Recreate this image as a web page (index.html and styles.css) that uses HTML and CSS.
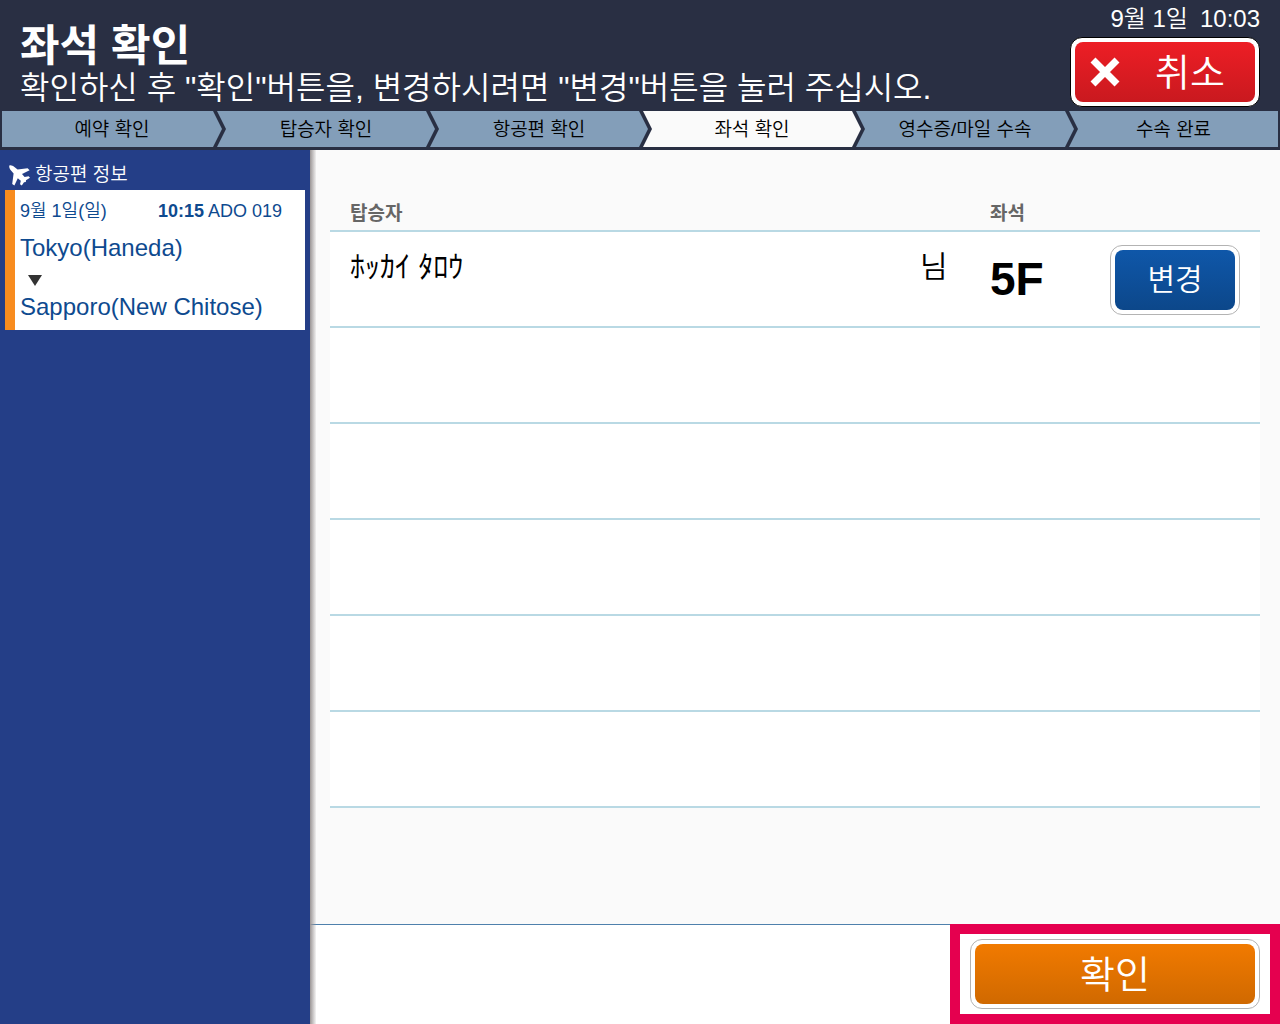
FILE: index.html
```html
<!DOCTYPE html>
<html lang="ko">
  <head>
    <meta charset="UTF-8" />
    <meta name="viewport" content="width=device-width" />
    <title>좌석 확인</title>
    <link rel="stylesheet" href="styles.css">
  </head>
  <body>
    <header class="header">
      <div class="header-top">
        <div class="header-title">
          <h1>좌석 확인</h1>
          <p>확인하신 후 "확인"버튼을, 변경하시려면 "변경"버튼을 눌러 주십시오.</p>
        </div>
        <div class="header-side">
          <div class="clock"><span>9월 1일</span><span>10:03</span></div>
          <button type="button" class="btn btn-cancel">
            <span class="btn-face">
              <svg class="icon-cross" viewBox="0 0 30 30" aria-hidden="true">
                <path d="M3 3L27 27M27 3L3 27" stroke="#fff" stroke-width="7" />
              </svg>
              <span class="btn-text">취소</span>
            </span>
          </button>
        </div>
      </div>
      <ol class="steps">
        <li>예약 확인</li>
        <li>탑승자 확인</li>
        <li>항공편 확인</li>
        <li class="current">좌석 확인</li>
        <li>영수증/마일 수속</li>
        <li>수속 완료</li>
      </ol>
    </header>

    <div class="content">
      <aside class="sidebar">
        <h2>
          <svg class="icon-plane" viewBox="0 0 21 21" aria-hidden="true">
            <path d="M0.4 0.4C2 -0.1 4 0.8 5.4 2L8.6 4.6L18.6 3.2L20.6 5.2L13 9L15.6 12L19.6 11.2L21 12.8L17 15.2L16.8 17L15 17.2L12.8 20.6L11 19.2L11.8 15.8L8.8 13.2L5.4 20.4L3.2 19L4.6 8.6L1.8 5.2C0.8 3.8 -0.2 2 0.4 0.4Z" fill="#fff" />
          </svg>
          항공편 정보
        </h2>
        <div class="flight">
          <div class="flight-info">
            <span>9월 1일(일)</span>
            <span class="flight-no"><b>10:15</b><span>ADO 019</span></span>
          </div>
          <p class="city">Tokyo(Haneda)</p>
          <div class="flight-arrow"></div>
          <p class="city">Sapporo(New Chitose)</p>
        </div>
      </aside>

      <main class="main">
        <div class="seats">
          <table>
            <thead>
              <tr>
                <th>탑승자</th>
                <th class="col-suffix"></th>
                <th class="col-seat">좌석</th>
                <th class="col-change"></th>
              </tr>
            </thead>
            <tbody>
              <tr>
                <td class="name">ﾎｯｶｲ ﾀﾛｳ</td>
                <td class="suffix">님</td>
                <td class="seat">5F</td>
                <td class="change">
                  <button type="button" class="btn btn-change">
                    <span class="btn-face">변경</span>
                  </button>
                </td>
              </tr>
              <tr><td colspan="4"></td></tr>
              <tr><td colspan="4"></td></tr>
              <tr><td colspan="4"></td></tr>
              <tr><td colspan="4"></td></tr>
              <tr><td colspan="4"></td></tr>
            </tbody>
          </table>
        </div>
        <footer class="footer">
          <div class="highlight">
            <button type="button" class="btn btn-confirm">
              <span class="btn-face">확인</span>
            </button>
          </div>
        </footer>
      </main>
    </div>
  </body>
</html>
```
FILE: styles.css
```css
* {
  box-sizing: border-box;
}

body {
  display: flex;
  flex-direction: column;
  min-height: 100vh;
  margin: 0;
  font-family: "Liberation Sans", "Noto Sans CJK KR", sans-serif;
  font-weight: 350;
  background-color: #fafafa;
  color: #000;
}

h1,
h2,
p {
  margin: 0;
}

b {
  font-weight: bold;
}

/* header */
.header {
  padding: 0 2px 3px;
  background-color: #292f43;
  color: #fff;
}

.header-top {
  display: flex;
  justify-content: space-between;
  height: 111px;
  padding: 0 18px;
}

.header-title {
  padding-top: 22px;
}

.header-title h1 {
  font-size: 43px;
  line-height: 48px;
}

.header-title p {
  font-size: 32px;
  line-height: 36px;
}

.header-side {
  display: flex;
  flex-direction: column;
  align-items: flex-end;
}

.clock {
  display: flex;
  gap: 12px;
  padding-top: 1px;
  font-size: 24px;
  line-height: 36px;
}

/* buttons */
.btn {
  padding: 4px;
  border: 1px solid #b3b3b3;
  border-radius: 12px;
  background-color: #fff;
  color: #fff;
  font-family: inherit;
  font-weight: inherit;
  cursor: pointer;
}

.btn-face {
  display: flex;
  align-items: center;
  justify-content: center;
  height: 60px;
  padding-bottom: 6px;
  border-radius: 8px;
}

.btn-cancel {
  width: 190px;
  border-color: #000;
  font-size: 38px;
}

.btn-cancel .btn-face {
  padding: 0 30px 0 15px;
  background: linear-gradient(#ed1e25, #c9191f);
}

.btn-text {
  flex: 1;
  padding-bottom: 6px;
  text-align: right;
}

.btn-change {
  width: 130px;
  font-size: 30px;
}

.btn-change .btn-face {
  background: linear-gradient(#0f57a9, #0c478a);
}

.btn-confirm {
  width: 290px;
  font-size: 38px;
}

.btn-confirm .btn-face {
  background: linear-gradient(#f17a00, #d06900);
}

.icon-cross {
  width: 30px;
  height: 30px;
}

/* progress steps */
.steps {
  display: flex;
  margin: 0;
  padding: 0;
  list-style: none;
}

.steps li {
  flex: 218 1 0;
  height: 36px;
  margin-left: -5px;
  background-color: #839eb9;
  color: #000;
  font-size: 19px;
  line-height: 38px;
  text-align: center;
  white-space: nowrap;
  clip-path: polygon(0 0, calc(100% - 9px) 0, 100% 50%, calc(100% - 9px) 100%, 0 100%, 9px 50%);
}

.steps li:first-child {
  flex-grow: 220;
  margin-left: 0;
  clip-path: polygon(0 0, calc(100% - 9px) 0, 100% 50%, calc(100% - 9px) 100%, 0 100%);
}

.steps li:last-child {
  flex-grow: 209;
  clip-path: polygon(0 0, 100% 0, 100% 100%, 0 100%, 9px 50%);
}

.steps .current {
  background-color: #fafafa;
}

/* sidebar */
.content {
  display: flex;
  flex: 1;
}

.sidebar {
  position: relative;
  width: 310px;
  padding: 10px 5px;
  background-color: #243e87;
}

/* shadow over the list and the footer */
.sidebar::after {
  content: "";
  position: absolute;
  top: 0;
  bottom: 0;
  left: 100%;
  width: 6px;
  background: linear-gradient(to right, #9b9696, rgba(155, 150, 150, 0.1));
}

.sidebar h2 {
  display: flex;
  align-items: center;
  gap: 5px;
  height: 30px;
  padding-left: 4px;
  color: #fff;
  font-size: 19px;
  font-weight: inherit;
  line-height: 28px;
}

.icon-plane {
  width: 21px;
  height: 21px;
}

.flight {
  height: 140px;
  padding: 6px 5px;
  border-left: 10px solid #f88c1f;
  background-color: #fff;
  color: #0e4a8f;
}

.flight-info {
  display: flex;
  justify-content: space-between;
  padding-right: 18px;
  font-size: 18px;
  line-height: 30px;
}

.flight-no {
  display: flex;
  gap: 4px;
}

.city {
  font-size: 24px;
  line-height: 44px;
}

.flight-arrow {
  width: 0;
  margin: 5px 8px -1px;
  border: 7px solid transparent;
  border-top: 11px solid #333;
  border-bottom: 0;
}

/* seat list */
.main {
  display: flex;
  flex: 1;
  flex-direction: column;
}

.seats {
  flex: 1;
  padding: 44px 20px 20px;
}

table {
  width: 100%;
  border-collapse: separate;
  border-spacing: 0;
  table-layout: fixed;
}

th,
td {
  padding: 0;
  border-bottom: 2px solid #b9d9e4;
  text-align: left;
}

th {
  height: 38px;
  padding-top: 4px;
  color: #666;
  font-size: 19px;
  line-height: 32px;
}

th:first-child,
.name {
  padding-left: 20px;
}

td {
  height: 96px;
  background-color: #fff;
}

.col-suffix {
  width: 70px;
}

.col-seat {
  width: 120px;
}

.col-change {
  width: 150px;
}

.name,
.suffix {
  padding-bottom: 30px;
  font-size: 30px;
}

.name {
  font-family: "Liberation Sans", "Noto Sans CJK JP", sans-serif;
  font-weight: normal;
}

.seat {
  font-size: 46px;
  font-weight: bold;
}

.change {
  padding-top: 2px;
}

.footer {
  display: flex;
  justify-content: flex-end;
  border-top: 1px solid #4e80ac;
  background-color: #fff;
}

/* red frame round the confirm button */
.highlight {
  margin-top: -1px;
  padding: 5px 10px;
  border: 10px solid #e5004f;
}

.highlight .btn {
  display: block;
}
```
